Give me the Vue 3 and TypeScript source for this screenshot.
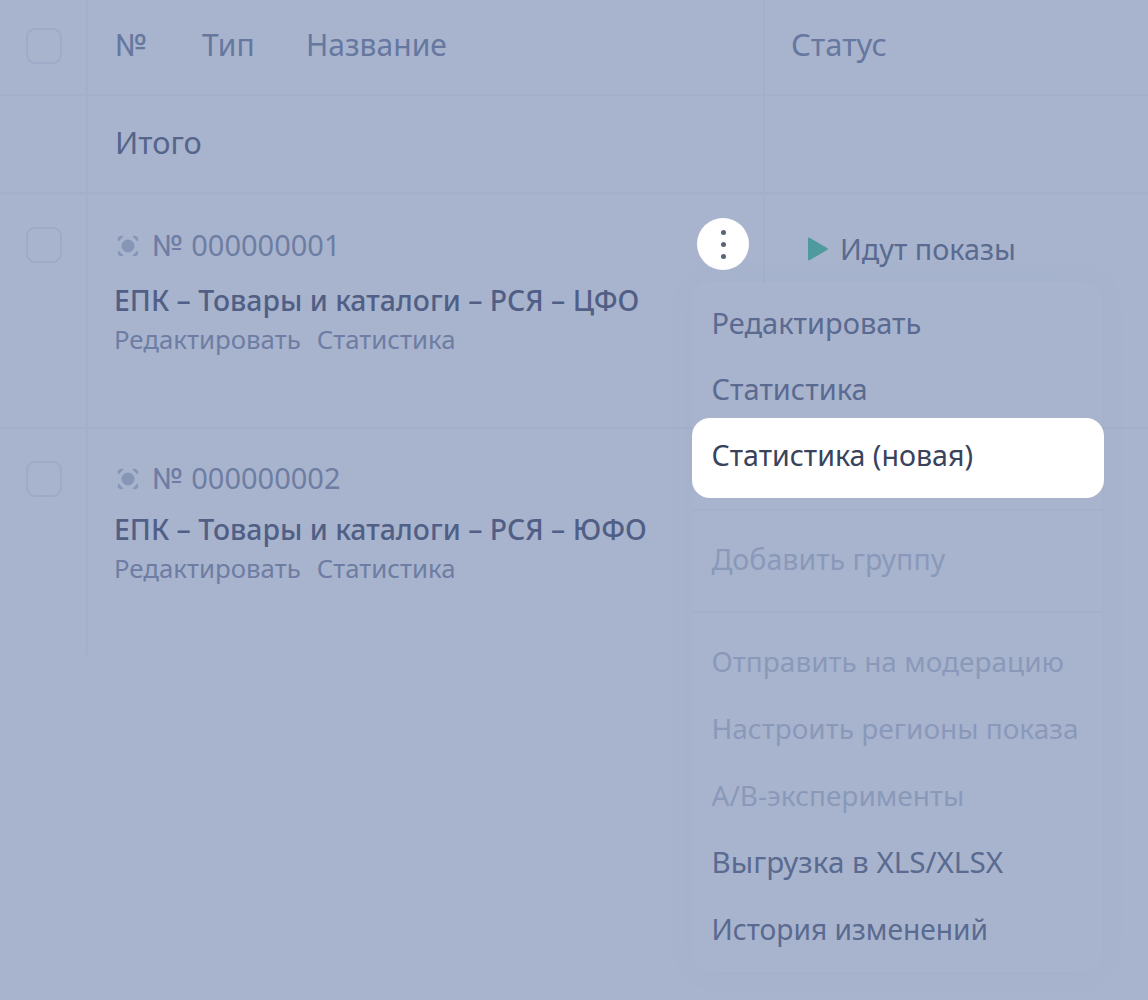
<template>
  <div class="page">
    <div class="row head">
      <div class="check-cell"><span class="check"></span></div>
      <div class="main-cell head-titles">
        <span class="t-num"><span class="sign">№</span></span>
        <span class="t-type">Тип</span>
        <span>Название</span>
      </div>
      <div class="status-cell">Статус</div>
    </div>
    <div class="row total">
      <div class="check-cell"></div>
      <div class="main-cell total-title">Итого</div>
      <div class="status-cell"></div>
    </div>
    <div v-for="(c, i) in campaigns" :key="c.num" class="row campaign" :class="{ first: i === 0, last: i === campaigns.length - 1 }">
      <div class="check-cell"><span class="check"></span></div>
      <div class="main-cell">
        <div class="camp-num">
          <svg class="camp-icon" width="24" height="24" viewBox="0 0 24 24" fill="#8795b7">
            <circle cx="12" cy="12" r="6.500" />
            <path d="M2.500 7.500l5-5c-.8-.7-2.200-.9-3.300-.6-1.400.4-2.100 1.300-2.300 2.400-.2 1.200 0 2.400.6 3.200z" />
            <path d="M21.500 7.500l-5-5c.8-.7 2.200-.9 3.300-.6 1.400.4 2.100 1.300 2.300 2.400.2 1.200 0 2.400-.6 3.200z" />
            <path d="M2.500 16.500l5 5c-.8.7-2.200.9-3.300.6-1.400-.4-2.100-1.300-2.300-2.400-.2-1.200 0-2.400.6-3.200z" />
            <path d="M21.500 16.500l-5 5c.8.7 2.200.9 3.300.6 1.400-.4 2.100-1.300 2.300-2.400.2-1.200 0-2.400-.6-3.200z" />
          </svg>
          <span><span class="sign">№</span> {{ c.num }}</span>
        </div>
        <div class="camp-name">{{ c.name }}</div>
        <div class="camp-links"><span>Редактировать</span><span>Статистика</span></div>
        <button v-if="i === 0" class="kebab" type="button">
          <i></i><i></i><i></i>
        </button>
      </div>
      <div class="status-cell">
        <div v-if="i === 0" class="status">
          <svg width="22" height="26" viewBox="0 0 22 26"><path d="M1 2.500v21a1 1 0 0 0 1.500.800l18-10.500a1 1 0 0 0 0-1.600l-18-10.500a1 1 0 0 0-1.500.800z" fill="#4f9a9c" /></svg>
          Идут показы
        </div>
      </div>
    </div>

    <div class="menu">
      <div class="group">
        <div v-for="m in menuTop" :key="m.label" class="item" :class="{ active: m.active }">{{ m.label }}</div>
      </div>
      <div class="group single">
        <div class="item off">Добавить группу</div>
      </div>
      <div class="group list">
        <div v-for="m in menuBottom" :key="m.label" class="item" :class="{ off: m.off, wide: m.wide }">{{ m.label }}</div>
      </div>
    </div>
  </div>
</template>

<script setup lang="ts">
const campaigns = [
  { num: '000000001', name: 'ЕПК – Товары и каталоги – РСЯ – ЦФО' },
  { num: '000000002', name: 'ЕПК – Товары и каталоги – РСЯ – ЮФО' },
];

const menuTop = [
  { label: 'Редактировать', active: false },
  { label: 'Статистика', active: false },
  { label: 'Статистика (новая)', active: true },
];

const menuBottom = [
  { label: 'Отправить на модерацию', off: true, wide: false },
  { label: 'Настроить регионы показа', off: true, wide: false },
  { label: 'A/B-эксперименты', off: true, wide: false },
  { label: 'Выгрузка в XLS/XLSX', off: false, wide: true },
  { label: 'История изменений', off: false, wide: false },
];
</script>

<style>
html,
body {
  background: #a8b4cd;
}
</style>

<style scoped>
.page {
  position: relative;
  width: 1148px;
  height: 1000px;
  overflow: hidden;
  background: #a8b4cd;
  font-family: 'Noto Sans', sans-serif;
  font-size: 28.6px;
  color: #5a6a90;
}

.row {
  display: flex;
  border-bottom: 2px solid #a3b0ca;
}

.head {
  height: 94px;
  font-size: 30px;
}

.total {
  height: 96px;
  border-bottom-width: 3px;
  font-size: 30.700px;
}

.campaign {
  height: 232px;
}

.campaign.last {
  height: 226px;
  border-bottom: none;
}

.check-cell {
  flex: none;
  width: 60px;
  border-right: 2px solid #a3b0ca;
  padding: 28px 0 0 26px;
}

.campaign .check-cell {
  padding-top: 32px;
}

.check {
  display: block;
  width: 32px;
  height: 32px;
  border: 2px solid #9dabc8;
  border-radius: 9px;
}

.main-cell {
  position: relative;
  flex: none;
  width: 648px;
  padding-left: 27px;
  border-right: 2px solid #a3b0ca;
}

.head-titles {
  display: flex;
  align-items: center;
  padding-bottom: 6px;
  box-sizing: content-box;
  height: 88px;
  color: #6677a0;
}

.sign {
  font-family: 'Inter', sans-serif;
}

.t-num {
  width: 87px;
}

.t-type {
  width: 104px;
}

.status-cell {
  flex: 1;
  padding: 0 0 6px 26px;
  font-size: 31px;
  color: #6677a0;
  display: flex;
  align-items: center;
}

.total-title {
  display: flex;
  align-items: center;
  padding-bottom: 4px;
  color: #55658c;
}

.campaign .status-cell {
  align-items: flex-start;
  padding: 34px 0 0 42px;
  font-size: 28.800px;
}

.status {
  display: flex;
  align-items: center;
  gap: 11px;
  color: #5a6a90;
}

.camp-num {
  display: flex;
  align-items: center;
  gap: 12px;
  margin-top: 32px;
  padding-left: 1px;
  line-height: 34px;
  font-size: 29px;
  color: #6e7da3;
}

.first .camp-num {
  margin-top: 33px;
}

.camp-name {
  margin: 14px 0 0 -1px;
  font-size: 28.400px;
  font-weight: 500;
  color: #515f86;
  line-height: 38px;
}

.first .camp-name {
  margin-top: 18px;
}

.camp-links {
  display: flex;
  gap: 16px;
  margin: 4px 0 0 -1px;
  font-size: 25.800px;
  line-height: 32px;
  color: #6e7da3;
}

.kebab {
  position: absolute;
  top: 23px;
  right: 14px;
  display: flex;
  flex-direction: column;
  align-items: center;
  justify-content: center;
  gap: 7px;
  width: 52px;
  height: 52px;
  padding: 0;
  border: none;
  border-radius: 50%;
  background: #fff;
}

.kebab i {
  width: 5px;
  height: 5px;
  border-radius: 50%;
  background: #5a6478;
}

.menu {
  position: absolute;
  top: 282px;
  left: 692px;
  width: 410px;
  height: 690px;
  padding-top: 9px;
  box-sizing: border-box;
  border-radius: 18px;
  background: #a8b4cd;
  box-shadow: 0 0 24px rgba(120, 138, 175, 0.08);
}

.group {
  padding-bottom: 11px;
  border-bottom: 2px solid #a3b0ca;
}

.group.single {
  padding: 16px 0 18px;
}

.group.list {
  padding: 16px 0 0;
  border-bottom: none;
}

.item {
  display: flex;
  align-items: center;
  height: 66px;
  padding: 0 0 4px 19.500px;
  box-sizing: border-box;
  font-size: 29px;
  white-space: nowrap;
  color: #5a6a90;
}

.item.off {
  font-size: 28.600px;
  color: #8a99ba;
}

.list .item {
  height: 67px;
  font-size: 28.200px;
}

.list .item.off {
  font-size: 28px;
}

.list .item.wide {
  font-size: 29.600px;
}

.item.active {
  position: relative;
  width: 412px;
  height: 80px;
  margin-top: -5px;
  padding-bottom: 8px;
  font-size: 28.600px;
  border-radius: 18px;
  background: #fff;
  color: #39435c;
}
</style>
